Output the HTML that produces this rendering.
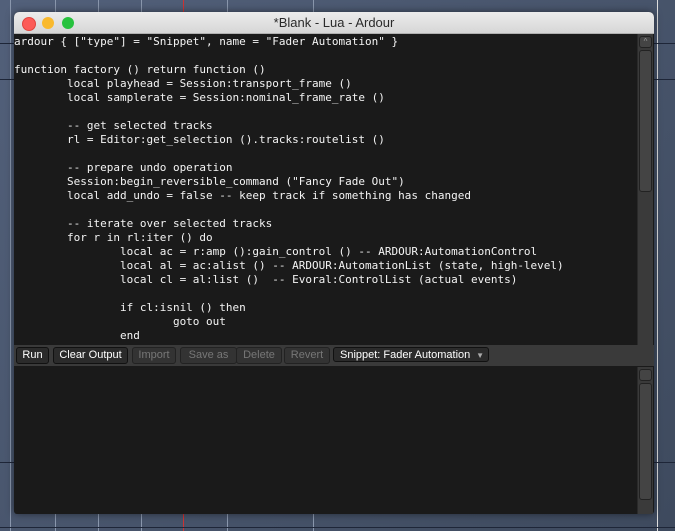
<!DOCTYPE html>
<html><head><style>
body{margin:0;width:675px;height:531px;overflow:hidden;background:linear-gradient(135deg,#52607a,#3e4a5e);position:relative;font-family:"Liberation Sans",sans-serif}
.v{position:absolute;top:0;bottom:0;width:1px;background:#8a97ad}
.h{position:absolute;left:0;right:0;height:1px;background:#1e2638}
.win{position:absolute;left:14px;top:12px;width:640px;height:502px;background:#1a1a1a;border-radius:5px 5px 3px 3px;overflow:hidden;box-shadow:0 0 8px rgba(0,0,0,.5)}
.title{height:21px;background:linear-gradient(#ececec,#d6d6d6);border-bottom:1px solid #b0b0b0;text-align:center;font-size:13px;line-height:21px;color:#2a2a2a}
.dot{position:absolute;top:5px;width:12px;height:12px;border-radius:50%}
pre{position:absolute;left:0;top:23px;margin:0;font:11px/14px "DejaVu Sans Mono",monospace;color:#f4f4f4;width:622px;height:310px;overflow:hidden}
.sb{position:absolute;right:1px;width:15px;background:#3a3a3a;border-left:1px solid #2a2a2a}
.tb{position:absolute;left:0;top:333px;width:640px;height:21px;background:#3a3a3a}
.b{position:absolute;top:2px;height:15px;border:1px solid #111;border-radius:3px;background:#2b2b2b;color:#fff;font-size:11px;line-height:15px;text-align:center}
.d{color:#777;border-color:#222;background:#333}
</style></head><body>
<div class="v" style="left:10px"></div><div class="v" style="left:55px"></div><div class="v" style="left:98px"></div><div class="v" style="left:141px"></div><div class="v" style="left:183px;background:#c33"></div><div class="v" style="left:227px"></div><div class="v" style="left:313px"></div><div class="v" style="left:657px;background:#ddd"></div>
<div class="h" style="top:43px"></div><div class="h" style="top:79px"></div><div class="h" style="top:462px"></div><div class="h" style="top:527px"></div>
<div class="win">
<div class="title">*Blank - Lua - Ardour</div>
<div class="dot" style="left:8px;background:#fc5b57;border:0.5px solid #e0443e"></div>
<div class="dot" style="left:28px;background:#f9b92d"></div>
<div class="dot" style="left:48px;background:#27c23e"></div>
<pre>ardour { ["type"] = "Snippet", name = "Fader Automation" }

function factory () return function ()
        local playhead = Session:transport_frame ()
        local samplerate = Session:nominal_frame_rate ()

        -- get selected tracks
        rl = Editor:get_selection ().tracks:routelist ()

        -- prepare undo operation
        Session:begin_reversible_command ("Fancy Fade Out")
        local add_undo = false -- keep track if something has changed

        -- iterate over selected tracks
        for r in rl:iter () do
                local ac = r:amp ():gain_control () -- ARDOUR:AutomationControl
                local al = ac:alist () -- ARDOUR:AutomationList (state, high-level)
                local cl = al:list ()  -- Evoral:ControlList (actual events)

                if cl:isnil () then
                        goto out
                end</pre>
<div class="sb" style="top:22px;height:311px"><div style="margin:2px 1px;height:10px;border:1px solid #222;border-radius:3px;background:#444;color:#999;font-size:8px;text-align:center">^</div><div style="margin:2px 1px;height:140px;border:1px solid #222;border-radius:3px;background:#444"></div></div>
<div class="tb">
<div class="b" style="left:2px;width:31px">Run</div>
<div class="b" style="left:39px;width:73px">Clear Output</div>
<div class="b d" style="left:118px;width:42px">Import</div>
<div class="b d" style="left:166px;width:55px">Save as</div>
<div class="b d" style="left:222px;width:44px">Delete</div>
<div class="b d" style="left:270px;width:44px">Revert</div>
<div class="b" style="left:319px;width:156px;text-align:left;padding-left:6px;box-sizing:border-box">Snippet: Fader Automation<span style="position:absolute;right:4px;font-size:8px;color:#aaa">▼</span></div>
</div>
<div class="sb" style="top:355px;height:147px"><div style="margin:2px 1px;height:10px;border:1px solid #222;border-radius:3px;background:#444"></div><div style="margin:2px 1px;height:115px;border:1px solid #222;border-radius:3px;background:#444"></div></div>
</div>
</body></html>
